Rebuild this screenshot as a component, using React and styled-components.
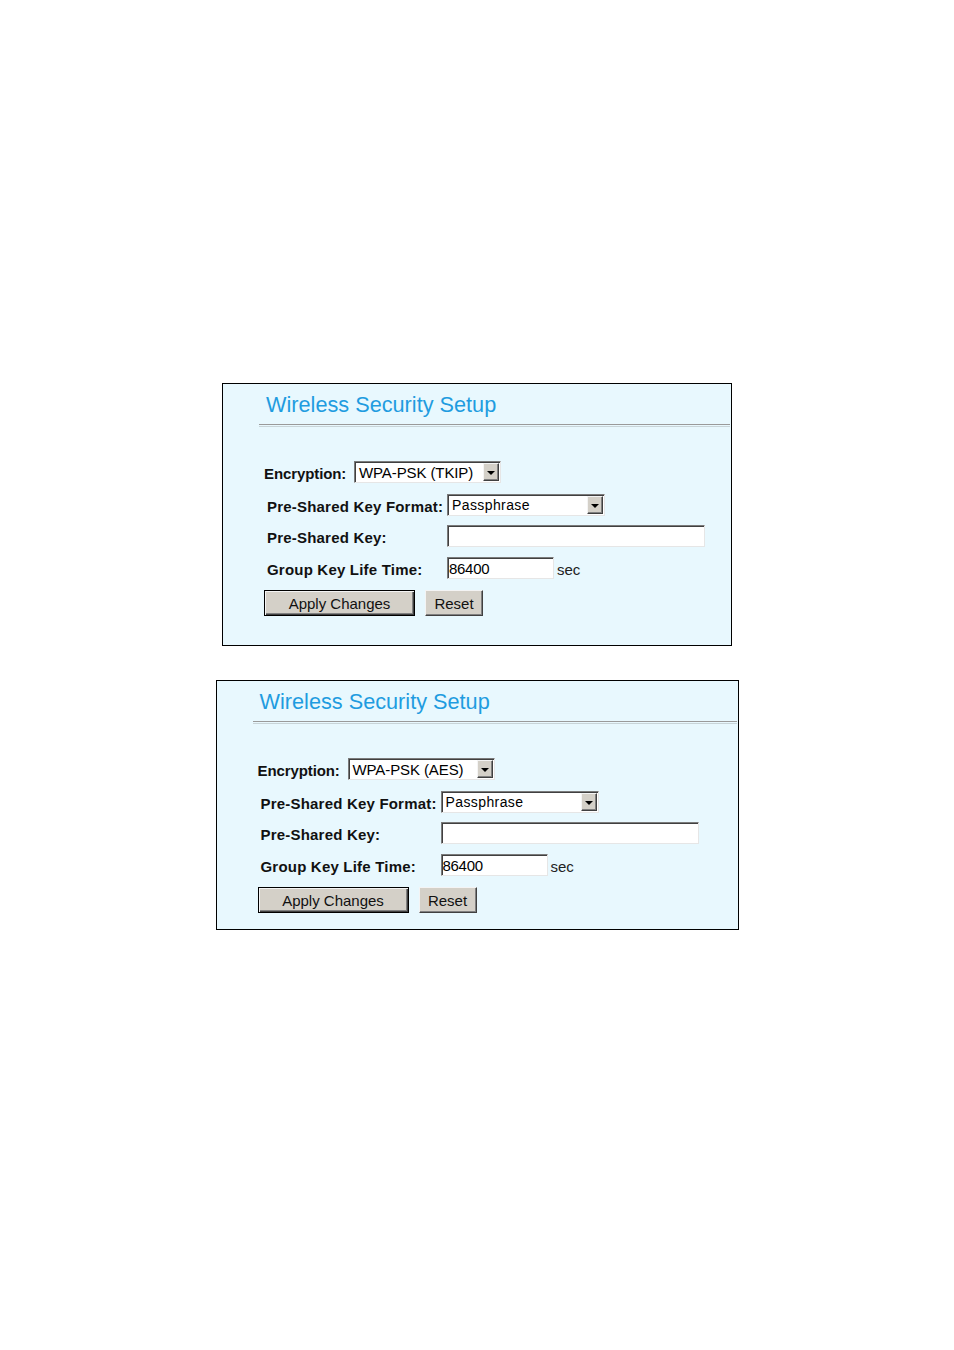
import React from "react";
import styled, { createGlobalStyle } from "styled-components";

const Global = createGlobalStyle`
  html, body { margin: 0; padding: 0; background: #fff; }
  body { font-family: "Liberation Sans", Arial, sans-serif; color: #000; }
`;

const Page = styled.div`
  width: 954px;
  min-height: 1350px;
  display: flex;
  flex-direction: column;
  align-items: center;
  padding-top: 383px;
  gap: 34px;
  box-sizing: border-box;
`;

const Panel = styled.section`
  width: ${(p) => p.$width}px;
  box-sizing: border-box;
  border: 1px solid #000;
  background: #e8f8fe;
  padding: 9px 1px ${(p) => p.$bottom}px 0;
`;

const Header = styled.div`
  margin-left: 36px;
`;

const Title = styled.h2`
  margin: 0;
  padding-left: 7px;
  font-family: "Liberation Sans", Arial, sans-serif;
  font-weight: normal;
  font-size: 21.7px;
  line-height: 24px;
  color: #1f9ce0;
`;

const Divider = styled.div`
  margin-top: 7px;
  height: 1px;
  border-top: 1px solid #9a9a9a;
  border-bottom: 1px solid #c8d4d8;
`;

const Form = styled.div`
  padding-top: 34px;
  display: flex;
  flex-direction: column;
`;

const EncRow = styled.div`
  display: grid;
  grid-template-columns: 90px auto;
  align-items: center;
  height: 22px;
  padding-left: 41px;
  margin-bottom: 11px;
`;

const Row = styled.div`
  display: grid;
  grid-template-columns: 180px auto;
  align-items: ${(p) => (p.$end ? "end" : "center")};
  height: 22px;
  padding-left: 44px;
  margin-bottom: ${(p) => p.$mb}px;
`;

const Label = styled.span`
  font-family: "Liberation Sans", Arial, sans-serif;
  font-weight: bold;
  font-size: 15px;
  letter-spacing: ${(p) => (p.$tight ? "-0.1px" : "0.2px")};
  color: #111;
  white-space: nowrap;
  align-self: center;
  padding-top: 2px;
`;

const SelectBox = styled.div`
  width: ${(p) => p.$width}px;
  height: 22px;
  box-sizing: border-box;
  display: flex;
  align-items: stretch;
  background: #fff;
  border-style: solid;
  border-width: 1px;
  border-color: #7b7b7b #e6e6e6 #e6e6e6 #7b7b7b;
  box-shadow: inset 1px 1px 0 #404040;
`;

const SelectText = styled.span`
  flex: 1;
  padding: 1px 0 0 4px;
  font-size: ${(p) => p.$size}px;
  letter-spacing: ${(p) => p.$ls}px;
  line-height: 19px;
  white-space: nowrap;
  overflow: hidden;
`;

const ArrowBtn = styled.span`
  width: 16px;
  margin: 1px 1px 1px 0;
  box-sizing: border-box;
  background: #d4d0c8;
  border-style: solid;
  border-width: 1px;
  border-color: #f4f4f4 #404040 #404040 #f4f4f4;
  box-shadow: inset -1px -1px 0 #808080;
  display: flex;
  align-items: center;
  justify-content: center;
  &::after {
    content: "";
    border-left: 4px solid transparent;
    border-right: 4px solid transparent;
    border-top: 4px solid #000;
    margin-top: 1px;
  }
`;

const TextInput = styled.input`
  width: ${(p) => p.$width}px;
  height: 22px;
  box-sizing: border-box;
  margin: 0;
  padding: 0 0 0 1px;
  background: #fff;
  border-style: solid;
  border-width: 1px;
  border-color: #7b7b7b #e6e6e6 #e6e6e6 #7b7b7b;
  box-shadow: inset 1px 1px 0 #404040;
  font-family: "Liberation Sans", Arial, sans-serif;
  font-size: 15px;
  letter-spacing: -0.3px;
  color: #000;
  outline: none;
`;

const Control = styled.div`
  display: flex;
  align-items: flex-end;
  gap: 3px;
`;

const Unit = styled.span`
  font-size: 15px;
  line-height: 15px;
  color: #222;
  margin-bottom: 2px;
`;

const Buttons = styled.div`
  display: flex;
  gap: 10px;
  padding-left: 41px;
`;

const Button = styled.button`
  width: ${(p) => p.$width}px;
  height: 26px;
  box-sizing: border-box;
  margin: 0;
  padding: 0;
  background: #d4d0c8;
  font-family: "Liberation Sans", Arial, sans-serif;
  font-size: 15px;
  color: #111;
  border-style: solid;
  border-width: 1px;
  border-color: ${(p) =>
    p.$default ? "#000" : "#f4f4f4 #404040 #404040 #f4f4f4"};
  box-shadow: ${(p) =>
    p.$default
      ? "inset 1px 1px 0 #f4f4f4, inset -1px -1px 0 #404040, inset -2px -2px 0 #808080"
      : "inset -1px -1px 0 #808080"};
`;

function SecurityPanel({ width, bottom, encryption }) {
  return (
    <Panel $width={width} $bottom={bottom}>
      <Header>
        <Title>Wireless Security Setup</Title>
        <Divider />
      </Header>
      <Form>
        <EncRow>
          <Label $tight>Encryption:</Label>
          <SelectBox $width={147}>
            <SelectText $size={15} $ls={-0.1}>{encryption}</SelectText>
            <ArrowBtn />
          </SelectBox>
        </EncRow>
        <Row $mb={9}>
          <Label>Pre-Shared Key Format:</Label>
          <SelectBox $width={158}>
            <SelectText $size={14} $ls={0.4}>Passphrase</SelectText>
            <ArrowBtn />
          </SelectBox>
        </Row>
        <Row $mb={10}>
          <Label>Pre-Shared Key:</Label>
          <TextInput $width={258} readOnly value="" />
        </Row>
        <Row $mb={11} $end>
          <Label>Group Key Life Time:</Label>
          <Control>
            <TextInput $width={107} readOnly value="86400" />
            <Unit>sec</Unit>
          </Control>
        </Row>
        <Buttons>
          <Button $width={151} $default>Apply Changes</Button>
          <Button $width={58}>Reset</Button>
        </Buttons>
      </Form>
    </Panel>
  );
}

export default function App() {
  return (
    <>
      <Global />
      <Page>
        <SecurityPanel width={510} bottom={29} encryption="WPA-PSK (TKIP)" />
        <SecurityPanel width={523} bottom={16} encryption="WPA-PSK (AES)" />
      </Page>
    </>
  );
}
